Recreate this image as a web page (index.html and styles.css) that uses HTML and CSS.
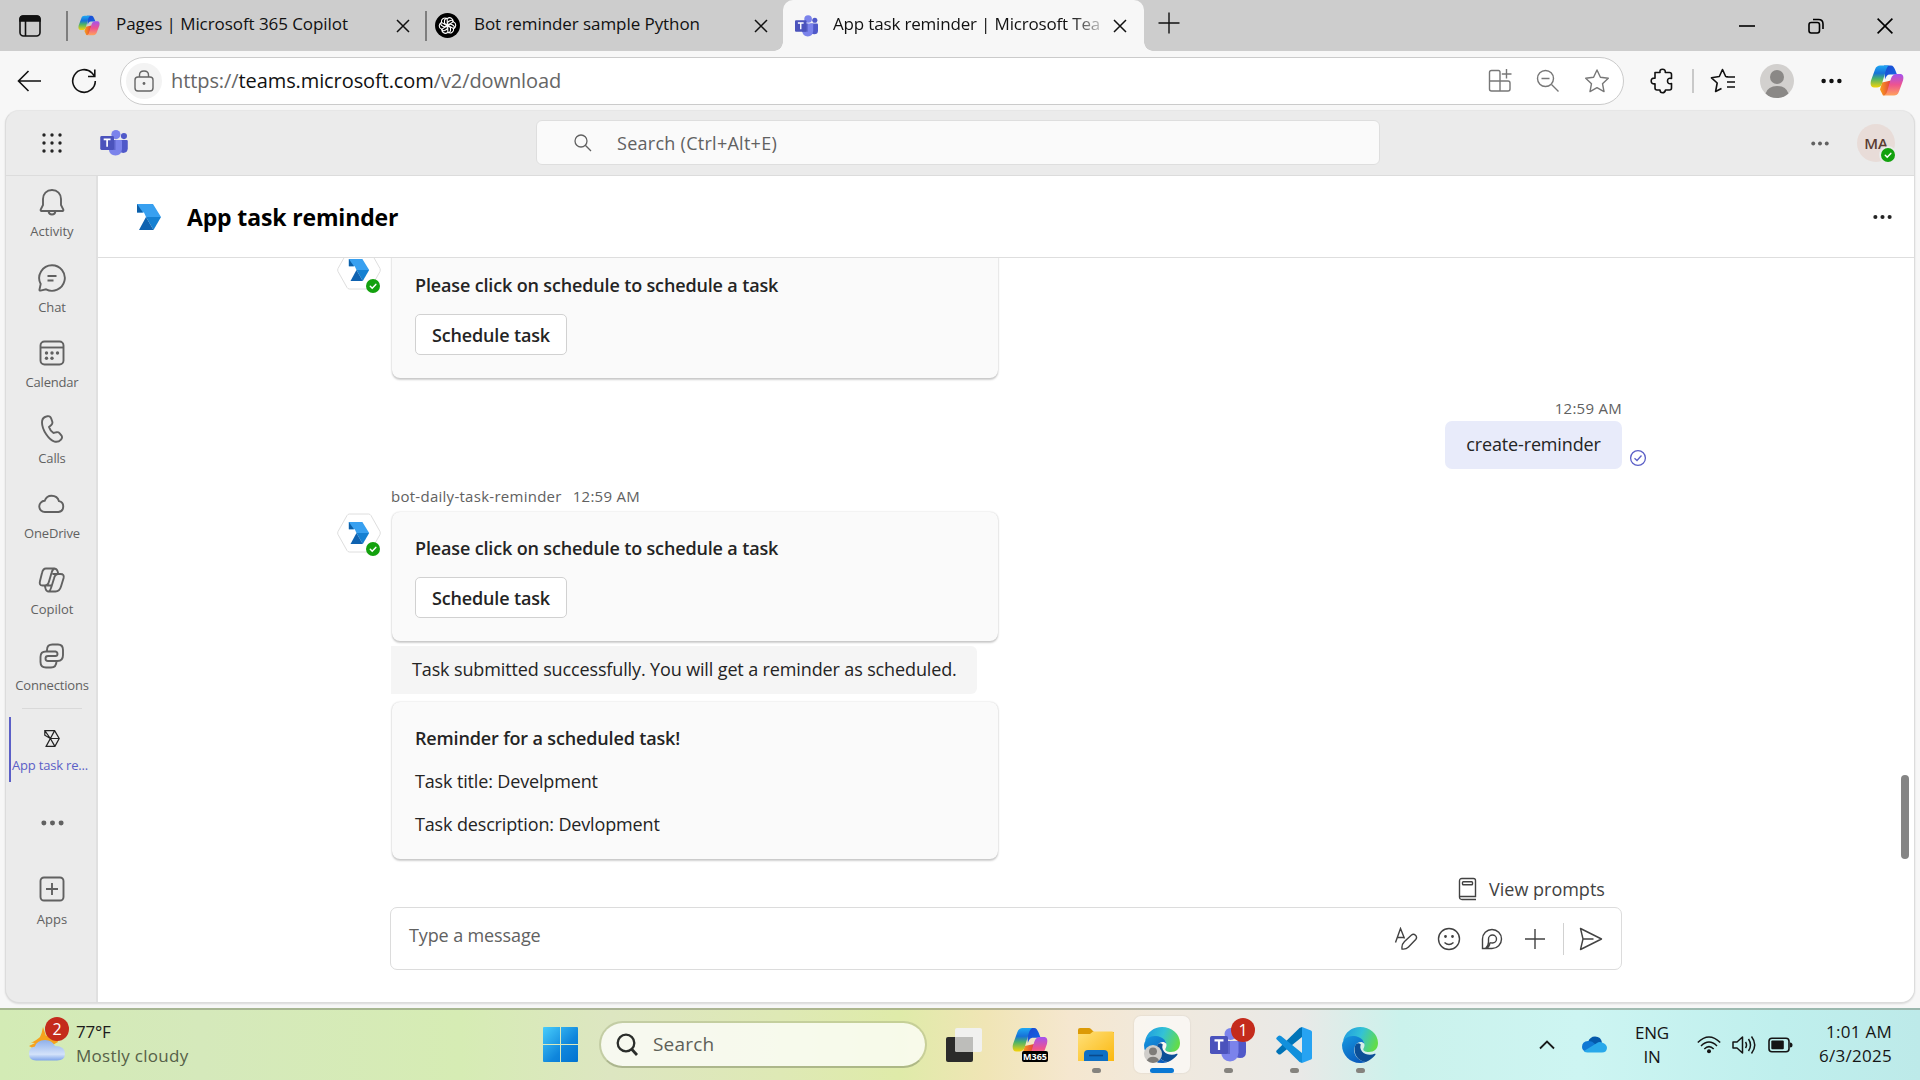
FILE: index.html
```html
<!DOCTYPE html>
<html lang="en">
<head>
<meta charset="utf-8">
<title>App task reminder | Microsoft Teams</title>
<link rel="stylesheet" href="styles.css">
</head>
<body>
<svg class="defs" aria-hidden="true">
  <defs>
    <linearGradient id="cpA" x1="0" y1="0" x2="0" y2="1"><stop offset="0" stop-color="#1fa8f4"/><stop offset=".35" stop-color="#1672d8"/><stop offset=".6" stop-color="#4bb26a"/><stop offset="1" stop-color="#f5d408"/></linearGradient>
    <linearGradient id="cpB" x1="0" y1="0" x2="0" y2="1"><stop offset="0" stop-color="#a452ef"/><stop offset=".5" stop-color="#ee5390"/><stop offset="1" stop-color="#ffa35c"/></linearGradient>
    <linearGradient id="cpC" x1="0" y1="0" x2="1" y2="1"><stop offset="0" stop-color="#1b48d0"/><stop offset="1" stop-color="#1668e6"/></linearGradient>
    <linearGradient id="cpD" x1="0" y1="0" x2="1" y2="0"><stop offset="0" stop-color="#f9a01b"/><stop offset="1" stop-color="#e23d3d"/></linearGradient>
    <linearGradient id="edA" x1="0" y1="0.2" x2="1" y2=".5"><stop offset="0" stop-color="#1f9be0"/><stop offset=".5" stop-color="#33c2d6"/><stop offset="1" stop-color="#62dc4a"/></linearGradient>
    <linearGradient id="edB" x1="0" y1="0" x2=".6" y2="1"><stop offset="0" stop-color="#1698e0"/><stop offset="1" stop-color="#0a5dbd"/></linearGradient>
    <linearGradient id="win" x1="0" y1="0" x2="1" y2="1"><stop offset="0" stop-color="#48cdfb"/><stop offset=".6" stop-color="#0f86dc"/><stop offset="1" stop-color="#0072d0"/></linearGradient>
    <linearGradient id="fold" x1="0" y1="0" x2="1" y2="1"><stop offset="0" stop-color="#ffe07a"/><stop offset="1" stop-color="#fbb80f"/></linearGradient>
    <linearGradient id="cloud" x1="0" y1="0" x2="0" y2="1"><stop offset="0" stop-color="#8fb0ea"/><stop offset=".7" stop-color="#d3e2fa"/><stop offset="1" stop-color="#7ea4ea"/></linearGradient>
    <symbol id="copilot" viewBox="0 0 34 30">
      <path d="M10 24 13 30C14 30 17 30 18 26L21 15 12 17Z" fill="url(#cpD)"/>
      <path d="M14 0H21C23 0 24 2 25 4L27 9H20C17 9 16 11 15 14Z" fill="url(#cpC)"/>
      <path d="M10 0H19C17 1 16 4 15 8L12 18C11 21 9 22 7 22H4C1 22 0 19 1 15L5 4C6 1 8 0 10 0Z" fill="url(#cpA)"/>
      <path d="M24 30H13C16 30 17 27 18 23L21 13C22 10 24 8.500 26 8.500H30C33 8.500 34 11 33 15L29 26C28 29 26 30 24 30Z" fill="url(#cpB)"/>
    </symbol>
    <symbol id="teams" viewBox="0 0 36 34">
      <circle cx="31" cy="8" r="4" fill="#5059c9"/><path d="M24 13H34.500Q36 13 36 14.500V24Q36 30 30 30 25 30 24 25Z" fill="#5059c9"/>
      <circle cx="20.500" cy="6" r="6" fill="#7b83eb"/><path d="M12 13H27Q28.500 13 28.500 14.500V24.500Q28 33 20 33.500 12 33 11 24.500Z" fill="#7b83eb"/>
      <path d="M12 13H20V26H11Z" fill="#4a52b8" opacity=".6"/>
      <rect y="8" width="18" height="18" rx="1.700" fill="#4b53bc"/><path d="M4.500 12.300H13.500M9 12.300V22" stroke="#fff" stroke-width="2.200" fill="none"/>
    </symbol>
    <symbol id="edge" viewBox="0 0 36 36">
      <path d="M1 14C3 5 10 0 18 0 28 0 36 7 36 16 36 22 32 25 27 25 23 25 20.500 23.500 21.500 21.500 24 18 22 12 15 11 9 10 4 12 1 14Z" fill="url(#edA)"/>
      <path d="M0 18C1 11 7 8.500 12 9 18 9.500 22 13 22.300 17 20 13.500 15 15 13 19 10 26 15 34 24 34.800 22 36 19 36 18 36 8 36 0 28 0 18Z" fill="url(#edB)"/>
      <path d="M13 19C11 27 16 34.500 24 34.900 28 33.500 32 30 33.500 27.500 33.800 26.500 33 26.500 32.500 26.800 29 28.500 23 28 20 24.500 18 22 18 19 18.800 17.500 16 15 14 17 13 19Z" fill="#0c4f97"/>
    </symbol>
    <symbol id="bot" viewBox="0 0 24 26">
      <path d="M0 0H16L24 13H9L7 8.500H0Z" fill="#38a0f0"/><path d="M0 0 6 8.500H0Z" fill="#0c5fa8"/><path d="M9 13H24L16.500 26Z" fill="#1580d2"/><path d="M9 13 16.500 26H2Z" fill="#0f62b0"/>
    </symbol>
    <symbol id="x" viewBox="0 0 14 14"><path d="M1 1 13 13M13 1 1 13" stroke="#111" stroke-width="1.500" fill="none"/></symbol>
    <symbol id="ok" viewBox="0 0 14 14"><circle cx="7" cy="7" r="7" fill="#13a10e"/><path d="M4.300 7.300 6.200 9.200 9.800 5.400" stroke="#fff" stroke-width="1.500" fill="none" stroke-linecap="round"/></symbol>
    <symbol id="dots" viewBox="0 0 24 6"><circle cx="3" cy="3" r="2.600"/><circle cx="12" cy="3" r="2.600"/><circle cx="21" cy="3" r="2.600"/></symbol>
    <symbol id="hex" viewBox="0 0 44 40"><path d="M12.500 1H31.500Q33 1 34 2.500L43 18.500Q43.600 20 43 21.500L34 37.500Q33 39 31.500 39H12.500Q11 39 10 37.500L1 21.500Q.4 20 1 18.500L10 2.500Q11 1 12.500 1Z" fill="#fff" stroke="#dedede"/></symbol>
  </defs>
</svg>

<header class="tabbar">
  <div class="workspace"><svg width="22" height="22" viewBox="0 0 22 22" fill="none" stroke="#111" stroke-width="1.600"><rect x="1" y="1" width="20" height="20" rx="3.500"/><path d="M1 6V4Q1 1 4 1H18Q21 1 21 4V6Z" fill="#111"/><path d="M6.500 6V21"/></svg></div>
  <div class="tab">
    <svg width="22" height="21"><use href="#copilot"/></svg><span class="tab-title">Pages | Microsoft 365 Copilot</span><svg class="close" width="14" height="14"><use href="#x"/></svg>
  </div>
  <div class="tab tab-second">
    <svg width="25" height="25" viewBox="0 0 25 25"><circle cx="12.500" cy="12.500" r="12.500" fill="#000"/><g fill="none" stroke="#fff" stroke-width="1.100"><path id="pet" d="M12.500 5.500C15 3.500 18.500 5.500 18 9L12.500 12.200 9.500 10.500V7.500Q10 5 12.500 5.500"/><use href="#pet" transform="rotate(60 12.500 12.500)"/><use href="#pet" transform="rotate(120 12.500 12.500)"/><use href="#pet" transform="rotate(180 12.500 12.500)"/><use href="#pet" transform="rotate(240 12.500 12.500)"/><use href="#pet" transform="rotate(300 12.500 12.500)"/></g></svg><span class="tab-title">Bot reminder sample Python</span><svg class="close" width="14" height="14"><use href="#x"/></svg>
  </div>
  <div class="tab tab-active">
    <svg width="23" height="22"><use href="#teams"/></svg><span class="tab-title fade">App task reminder | Microsoft Tea</span><svg class="close" width="14" height="14"><use href="#x"/></svg>
  </div>
  <svg class="newtab" width="22" height="22" viewBox="0 0 22 22"><path d="M11 .5V21.500M.5 11H21.500" stroke="#111" stroke-width="1.400"/></svg>
  <div class="winctl">
    <svg width="16" height="18" viewBox="0 0 16 18"><path d="M0 9H16" stroke="#000" stroke-width="1.600"/></svg>
    <svg width="16" height="16" viewBox="0 0 16 16" fill="none" stroke="#000" stroke-width="1.600"><rect x="1" y="4.500" width="10.500" height="10.500" rx="2.200"/><path d="M5 1.500H10.500Q15 1.500 15 6V11"/></svg>
    <svg width="16" height="16" viewBox="0 0 16 16"><path d="M.6.6 15.400 15.400M15.400.6.6 15.400" stroke="#000" stroke-width="1.600"/></svg>
  </div>
</header>

<div class="toolbar">
  <svg class="back" width="25" height="22" viewBox="0 0 25 22" fill="none" stroke="#111" stroke-width="1.600"><path d="M11.500 1 1.500 11 11.500 21M1.500 11H24"/></svg>
  <svg class="reload" width="26" height="26" viewBox="0 0 26 26" fill="none" stroke="#111" stroke-width="1.600"><path d="M24.300 13A11.300 11.300 0 1 1 21 5L23.500 8M23.800 1.500V8.500H17"/></svg>
  <div class="address">
    <span class="lock"><svg width="20" height="22" viewBox="0 0 20 22" fill="none" stroke="#666" stroke-width="1.400"><rect x="1" y="7" width="18" height="14" rx="3"/><path d="M5.500 7V5Q5.500 1 10 1T14.500 5V7"/><circle cx="10" cy="13.500" r="1.400" fill="#666" stroke="none"/></svg></span>
    <span class="url">https://<b>teams.microsoft.com</b>/v2/download</span>
    <div class="address-icons">
      <svg width="24" height="24" viewBox="0 0 24 24" fill="none" stroke="#777" stroke-width="1.400"><path d="M12 12V3Q12 1.500 10.500 1.500H3.500Q1.500 1.500 1.500 3.500V20Q1.500 22 3.500 22H20Q22 22 22 20V14Q22 12 20 12H1.500M12 12V22M18.500 0V9.500M13.800 5H23.500"/></svg>
      <svg width="24" height="24" viewBox="0 0 24 24" fill="none" stroke="#777" stroke-width="1.400"><circle cx="9.500" cy="9.500" r="8"/><path d="M15.500 15.500 22.500 22.500M5.500 9.500H13.500"/></svg>
      <svg width="26" height="26" viewBox="0 0 26 26" fill="none" stroke="#777" stroke-width="1.400" stroke-linejoin="round"><path d="M13 2 16.400 9.200 24.300 10.200 18.500 15.700 20 23.600 13 19.700 6 23.600 7.500 15.700 1.700 10.200 9.600 9.200Z"/></svg>
    </div>
  </div>
  <svg class="ext" width="24" height="26" viewBox="0 0 24 26" fill="none" stroke="#111" stroke-width="1.600" stroke-linejoin="round"><path d="M5 4.500H10Q9.500 1.200 12.500 1.200T15.300 4.500H19.500Q21.500 4.500 21.500 6.500V10.500Q17.500 9.500 17.500 13T21.500 15.500V20Q21.500 22 19.500 22H15.500Q15 24.800 12.500 24.800T10 22H7Q5 22 5 20V15.800Q1.200 16.200 1.200 13T5 10.200Z"/></svg>
  <i class="tool-sep"></i>
  <svg class="favs" width="26" height="26" viewBox="0 0 26 26" fill="none" stroke="#111" stroke-width="1.600" stroke-linejoin="round"><path d="M18 8.800 15.700 8.500 12.500 1.500 9.300 8.500 1.500 9.800 7.200 15 5.600 23.500 11.500 20.500M16 9H25M17 14H25M17 19H25"/></svg>
  <svg class="profile" width="34" height="34" viewBox="0 0 34 34"><circle cx="17" cy="17" r="17" fill="#d2d0ce"/><circle cx="17" cy="13" r="7" fill="#8a8886"/><path d="M5.500 29.500Q8 22 17 22T28.500 29.500Q24 34 17 34T5.500 29.500Z" fill="#8a8886"/></svg>
  <svg class="more" width="21" height="6" fill="#111"><use href="#dots"/></svg>
  <svg class="cp" width="34" height="31"><use href="#copilot"/></svg>
</div>

<main class="page">
  <div class="app">
    <header class="app-head">
      <svg class="waffle" width="20" height="20" viewBox="0 0 20 20" fill="#242424"><circle cx="2" cy="2" r="1.700"/><circle cx="10" cy="2" r="1.700"/><circle cx="18" cy="2" r="1.700"/><circle cx="2" cy="10" r="1.700"/><circle cx="10" cy="10" r="1.700"/><circle cx="18" cy="10" r="1.700"/><circle cx="2" cy="18" r="1.700"/><circle cx="10" cy="18" r="1.700"/><circle cx="18" cy="18" r="1.700"/></svg>
      <svg class="logo" width="28" height="26"><use href="#teams"/></svg>
      <div class="search"><svg width="18" height="18" viewBox="0 0 18 18" fill="none" stroke="#616161" stroke-width="1.300"><circle cx="7" cy="7" r="6"/><path d="M11.300 11.300 17 17"/></svg><span>Search (Ctrl+Alt+E)</span></div>
      <svg class="head-dots" width="18" height="5" fill="#616161"><use href="#dots"/></svg>
      <div class="me">MA<svg class="presence" width="18" height="18" viewBox="-2 -2 18 18"><circle cx="7" cy="7" r="9" fill="#ebebeb"/><use href="#ok" width="14" height="14"/></svg></div>
    </header>
    <div class="body">
      <nav class="rail">
        <a class="item"><svg width="28" height="28" viewBox="0 0 28 28"><path d="M14 2C8.500 2 5 6 5 11V17L2.700 21.500Q2.300 23 3.500 23H24.500Q25.700 23 25.300 21.500L23 17V11C23 6 19.500 2 14 2ZM10.500 23Q11 26.500 14 26.500T17.500 23"/></svg><span class="label-plain">Activity</span></a>
        <a class="item"><svg width="28" height="28" viewBox="0 0 28 28"><path d="M14 1.200A12.800 12.800 0 1 1 8 25.300L2.500 26.600Q1.200 26.800 1.500 25.500L2.700 20A12.800 12.800 0 0 1 14 1.200ZM9.500 12H18.500M9.500 16.500H15.500"/></svg><span>Chat</span></a>
        <a class="item"><svg width="28" height="28" viewBox="0 0 28 28"><rect x="2.500" y="2.500" width="23" height="23" rx="4"/><path d="M2.500 8.500H25.500"/><g fill="#616161" stroke="none"><circle cx="8.500" cy="14" r="1.700"/><circle cx="14" cy="14" r="1.700"/><circle cx="19.500" cy="14" r="1.700"/><circle cx="8.500" cy="19.300" r="1.700"/><circle cx="14" cy="19.300" r="1.700"/></g></svg><span>Calendar</span></a>
        <a class="item"><svg width="28" height="28" viewBox="0 0 28 28"><path d="M7 2 9.500 1.200Q12.300.8 13.200 3.500L14.300 6.800Q14.800 8.700 13.300 10L11 12Q12 15.500 15.500 18L18.800 17.200Q20.500 17 21.700 18.300L23.500 20.600Q24.800 22.700 23 24.600 20.300 27.500 16.500 26.600C11 25 4 15 4 7.500Q4 3.200 7 2Z"/></svg><span>Calls</span></a>
        <a class="item"><svg width="28" height="28" viewBox="0 0 28 28"><path d="M7 22H20.500A5.500 5.500 0 0 0 21 11.200Q19.500 5.800 13.500 5.800 8.500 5.800 6.700 10.800A5.600 5.600 0 0 0 7 22Z"/></svg><span>OneDrive</span></a>
        <a class="item"><svg width="28" height="28" viewBox="0 0 28 28"><path d="M8 2.500H16Q18.500 2.500 19.500 5L20.300 8H22.500Q26.500 8 25.600 12L23 20.500Q21.500 25.500 17.500 25.500H10.500Q8.500 25.500 7.700 23L6.700 19.500H4.500Q.8 19.500 2 15L4 7Q5 2.500 8 2.500ZM16.500 2.500Q14.500 3 13.500 7L11 15.500Q10 19.500 6.700 19.500M20.300 8Q17 8 16 12.500L13.500 20.500Q12 25.500 10.500 25.500M14.500 8H20.300M7 19.500H13.700"/></svg><span class="label-plain">Copilot</span></a>
        <a class="item"><svg width="28" height="28" viewBox="0 0 28 28"><path d="M9 10V8Q9 2.500 14.500 2.500H20Q25 2.500 25 8V13Q25 19 19.500 19H10Q7.500 19 7.500 16.500T10 14H17.500Q19.500 14 19.500 12T17.500 9.500H8Q2.500 9.500 2.500 15V20Q2.500 25.500 8 25.500H13Q18.500 25.500 18.500 19"/></svg><span>Connections</span></a>
        <i class="rail-line"></i>
        <a class="item item-active"><svg width="16" height="17" viewBox="0 0 24 26"><path d="M1 1H16L23 13 16.500 25H3L9.500 13 1 8ZM1 1 9.500 13H23M9.500 13 16.500 25M9.500 13 16 1M9.500 13 3 25"/></svg><span>App task re...</span></a>
        <svg class="rail-dots" width="23" height="6" fill="#616161"><use href="#dots"/></svg>
        <a class="item item-apps"><svg width="28" height="28" viewBox="0 0 28 28"><rect x="2.500" y="2.500" width="23" height="23" rx="3.500"/><path d="M14 8V20M8 14H20"/></svg><span class="label-plain">Apps</span></a>
      </nav>
      <section class="chat">
        <header class="chat-head"><svg width="24" height="26"><use href="#bot"/></svg><h1>App task reminder</h1><svg class="chat-dots" width="19" height="6" fill="#242424"><use href="#dots"/></svg></header>
        <div class="scroller">
          <div class="messages">
            <div class="row">
              <div class="avatar"><svg width="44" height="40"><use href="#hex"/><use href="#bot" x="11" y="9" width="22" height="22"/></svg><svg class="presence-bot" width="14" height="14"><use href="#ok"/></svg></div>
              <div class="card"><strong>Please click on schedule to schedule a task</strong><span class="btn">Schedule task</span></div>
            </div>
            <div class="mine">
              <time class="time">12:59 AM</time>
              <div class="bubble"><span>create-reminder</span><svg class="sent" width="18" height="18" viewBox="0 0 18 18" fill="none" stroke="#5b5fc7" stroke-width="1.300"><circle cx="9" cy="9" r="7.400"/><path d="M5.500 9.200 8 11.500 12.500 6.500"/></svg></div>
            </div>
            <div class="meta"><span class="bot-name">bot-daily-task-reminder</span><time class="time">12:59 AM</time></div>
            <div class="row">
              <div class="avatar"><svg width="44" height="40"><use href="#hex"/><use href="#bot" x="11" y="9" width="22" height="22"/></svg><svg class="presence-bot" width="14" height="14"><use href="#ok"/></svg></div>
              <div class="card"><strong>Please click on schedule to schedule a task</strong><span class="btn">Schedule task</span></div>
            </div>
            <div class="reply"><span>Task submitted successfully. You will get a reminder as scheduled.</span></div>
            <div class="card reminder"><strong>Reminder for a scheduled task!</strong><span>Task title: Develpment</span><span>Task description: Devlopment</span></div>
          </div>
          <i class="thumb"></i>
        </div>
        <div class="prompts"><svg width="19" height="24" viewBox="0 0 19 24" fill="none" stroke="#424242" stroke-width="1.400"><path d="M18 22.500H4Q1.500 22.500 1.500 20V4Q1.500 1.500 4 1.500H15.500Q17.500 1.500 17.500 3.500V19.500H1.500"/><rect x="4.500" y="4.800" width="10" height="3" rx=".8"/></svg><span>View prompts</span></div>
        <div class="composer">
          <span class="placeholder">Type a message</span>
          <svg width="24" height="24" viewBox="0 0 24 24"><path d="M1.500 15.500 6.500 1.500 10.500 11.500M3.300 10.500H10M8 21.500Q7.500 17.500 10.500 14.500L17.500 8Q19.500 6.500 21.500 8.300 23.500 10.300 21.700 12.500L14.500 20Q12 22.500 8 22Z"/></svg>
          <svg width="24" height="24" viewBox="0 0 24 24"><circle cx="12" cy="12" r="10.500"/><path d="M7.500 15.500Q12 19.500 16.500 15.500"/><circle cx="8.500" cy="9.500" r=".7" fill="#424242"/><circle cx="15.500" cy="9.500" r=".7" fill="#424242"/></svg>
          <svg width="24" height="24" viewBox="0 0 24 24"><path d="M2.500 21.500V12A9.500 9.500 0 1 1 12 21.500ZM5.500 21.500Q8.500 19 8.500 15V12A4 4 0 1 1 12.500 16Q10.500 16 10 15.500M5.500 21.500Q9.500 20.500 10 15.500"/></svg>
          <svg width="24" height="24" viewBox="0 0 24 24"><path d="M12 2V22M2 12H22"/></svg>
          <i class="composer-sep"></i>
          <svg width="24" height="24" viewBox="0 0 24 24"><path d="M1.500 1.500 22.500 12 1.500 22.500 4 12ZM4 12H14.500" stroke-linejoin="round"/></svg>
        </div>
      </section>
    </div>
  </div>
</main>

<footer class="taskbar">
  <div class="weather">
    <div class="weather-icon"><svg width="38" height="36" viewBox="0 0 38 36"><path d="M15 1 18 10Q22 6 26 6L30 16 12 26 1 20 7 17Q3 16 1 18 9 14 12 11Q14 7 15 1Z" fill="#f6a21d"/><path d="M8 34.500Q1 34.500 1 27.500 1 21.500 7 20.500 9 14 17 14 24 14 27 20 37 20 37 27.500 37 34.500 29 34.500Z" fill="url(#cloud)"/></svg><span class="badge">2</span></div>
    <div class="weather-text"><span class="temp">77°F</span><span class="cond">Mostly cloudy</span></div>
  </div>
  <div class="dock">
    <svg class="start" width="35" height="35" viewBox="0 0 35 35" fill="url(#win)"><path d="M1 0H17V17H0V1Q0 0 1 0ZM18 0H34Q35 0 35 1V17H18ZM0 18H17V35H1Q0 35 0 34ZM18 18H35V34Q35 35 34 35H18Z"/></svg>
    <div class="tsearch"><svg width="22" height="23" viewBox="0 0 22 23" fill="none" stroke="#2a2d2a" stroke-width="2.300"><circle cx="10" cy="10" r="8.300"/><path d="M15.500 16 21 22" stroke-width="2.800"/></svg><span>Search</span></div>
    <div class="dapp"><svg width="36" height="34" viewBox="0 0 36 34"><rect y="9" width="27" height="25" rx="2" fill="#2b2b2a"/><rect x="9" width="27" height="24" rx="2" fill="#f1f1ef"/><path d="M9 9H27V24H11Q9 24 9 22Z" fill="#bdbdba"/></svg></div>
    <div class="dapp"><svg width="36" height="34" viewBox="0 0 36 34"><use href="#copilot" width="36" height="32"/></svg><span class="m365">M365</span></div>
    <div class="dapp"><svg width="36" height="34" viewBox="0 0 36 34"><path d="M0 2Q0 0 2 0H11Q12 0 13 1L16 4H36V12H0Z" fill="#dc9a06"/><path d="M0 6H12L15 3.500H34Q36 3.500 36 5.500V33H0Z" fill="url(#fold)"/><path d="M6 33V26Q6 22 10 22H26Q30 22 30 26V33Z" fill="#0f70c4"/><path d="M11 27.500H25" stroke="#0a4a8c" stroke-width="1.600"/></svg><i class="run"></i></div>
    <div class="dapp dapp-on"><svg width="36" height="36"><use href="#edge"/></svg><svg class="person" width="18" height="18" viewBox="0 0 34 34"><circle cx="17" cy="17" r="17" fill="#cfcdca"/><circle cx="17" cy="12" r="7.500" fill="#7e7c79"/><path d="M5.500 29.500Q8 22 17 22T28.500 29.500Q24 34 17 34T5.500 29.500Z" fill="#7e7c79"/></svg><i class="run run-on"></i></div>
    <div class="dapp"><svg width="36" height="34"><use href="#teams"/></svg><span class="badge badge-teams">1</span><i class="run"></i></div>
    <div class="dapp"><svg width="36" height="36" viewBox="0 0 36 36"><path d="M26 0V10L5 27Q3.500 28 2.200 27L.7 25.500Q-.3 24.500.8 23.300L23.500 1Z" fill="#0073b7"/><path d="M.8 12.500Q-.3 11.500.7 10.500L2.200 9Q3.500 8 5 9L26 26V36L23.500 35Z" fill="#1290dc"/><path d="M26 0 35 3.500Q36 4 36 5V31Q36 32 35 32.500L26 36Z" fill="#27a3f2"/></svg><i class="run"></i></div>
    <div class="dapp"><svg width="36" height="36"><use href="#edge"/></svg><i class="run"></i></div>
  </div>
  <div class="tray">
    <svg class="caret" width="16" height="10" viewBox="0 0 16 10"><path d="M1 8.500 8 1.500 15 8.500" fill="none" stroke="#1a1a1a" stroke-width="1.800"/></svg>
    <svg class="od" width="25" height="17" viewBox="0 0 25 17"><path d="M6 6Q8 .5 13 .5 19 .5 20 6.500L14 10Z" fill="#0459ab"/><path d="M5 16Q0 15 0 11 0 5.500 6 5 10 4.500 13 8L18 11 10 16Z" fill="#0f78d4"/><path d="M5.500 16.500Q2 16 2 15L15 7Q17 5.500 20 6.500 25 8 25 12 24.500 16.500 20 16.500Z" fill="#28a8ea"/></svg>
    <div class="lang"><span>ENG</span><span>IN</span></div>
    <svg class="wifi" width="24" height="18" viewBox="0 0 24 18" fill="none" stroke="#151515" stroke-width="1.500"><path d="M.8 6.500Q12-4.500 23.200 6.500M4 10Q12 2 20 10M7.300 13Q12 8.300 16.700 13"/><circle cx="12" cy="15.300" r="2" fill="#151515" stroke="none"/></svg>
    <svg class="vol" width="25" height="20" viewBox="0 0 25 20" fill="none" stroke="#151515" stroke-width="1.500" stroke-linejoin="round"><path d="M1 7H5L10.500 2V18L5 13H1ZM13.500 7Q15.500 10 13.500 13M16.500 4Q20.500 10 16.500 16M19.500 1.500Q26 10 19.500 18.500"/></svg>
    <svg class="bat" width="25" height="16" viewBox="0 0 25 16"><rect x="1" y="1.200" width="20" height="13.500" rx="3" fill="none" stroke="#151515" stroke-width="1.600"/><rect x="3.300" y="3.600" width="12.500" height="8.700" rx="1" fill="#151515"/><path d="M22 5.500Q24.500 5.500 24.500 8T22 10.500Z" fill="#151515"/></svg>
    <div class="clock"><span>1:01 AM</span><span>6/3/2025</span></div>
  </div>
</footer>
</body>
</html>
```

FILE: styles.css
```css
* { box-sizing: border-box; }
body { margin: 0; width: 1920px; height: 1080px; overflow: hidden; display: flex; flex-direction: column; background: #f7f7f7; font-family: "Open Sans", "Noto Sans", sans-serif; color: #242424; }
svg { display: block; flex: none; }
span, time, strong { white-space: nowrap; }
.defs { position: absolute; width: 0; height: 0; }

/* tab strip */
.tabbar { height: 51px; flex: none; background: #cdcdcd; display: flex; align-items: center; font-size: 17px; letter-spacing: -.07px; color: #111; }
.workspace { width: 68px; height: 30px; padding: 4px 0 0 19px; border-right: 2px solid #7e7e7e; }
.tab { width: 359px; height: 30px; display: flex; align-items: center; padding: 0 15px 0 10px; border-right: 2px solid #7e7e7e; }
.tab svg:first-child { margin-right: 16px; }
.tab-second { width: 356px; padding: 0 15px 0 8px; border: 0; }
.tab-second svg:first-child { margin-right: 14px; }
.tab-title { margin-top: -5px; }
.close { margin-left: auto; }
.tab-active { height: 51px; width: 361px; align-self: flex-end; background: #f7f7f7; border: 0; border-radius: 10px 10px 0 0; padding: 0 17px 0 12px; position: relative; }
.tab-active svg:first-child { margin-right: 15px; }
.tab-active::before, .tab-active::after { content: ""; position: absolute; bottom: 0; width: 9px; height: 9px; background: radial-gradient(circle at 0 0, #cdcdcd 8.500px, #f7f7f7 9px); left: -9px; }
.tab-active::after { left: auto; right: -9px; background: radial-gradient(circle at 100% 0, #cdcdcd 8.500px, #f7f7f7 9px); }
.fade { letter-spacing: -.17px; -webkit-mask-image: linear-gradient(90deg, #000 89%, rgba(0,0,0,.25)); mask-image: linear-gradient(90deg, #000 89%, rgba(0,0,0,.25)); }
.newtab { margin-left: 14px; margin-bottom: 5px; }
.winctl { margin-left: auto; display: flex; gap: 53px; padding-right: 27px; align-items: center; }

/* browser toolbar */
.toolbar { height: 59px; flex: none; display: flex; align-items: center; padding: 0 16px 0 17px; }
.reload { margin-left: 29px; }
.address { margin-left: 23px; width: 1504px; height: 48px; border: 1.500px solid #cbcbcb; border-radius: 24px; background: #fff; display: flex; align-items: center; padding: 0 13px 0 5px; }
.lock { width: 36px; height: 36px; border-radius: 18px; background: #f3f3f3; display: flex; align-items: center; justify-content: center; }
.url { font-size: 20px; letter-spacing: -.09px; color: #666; margin-left: 9px; }
.url b { font-weight: 400; color: #111; }
.address-icons { display: flex; gap: 24px; margin-left: auto; align-items: center; }
.ext { margin-left: 26px; }
.tool-sep { width: 1.500px; height: 24px; background: #c9c9c9; margin-left: 18px; }
.favs { margin-left: 16px; }
.profile { margin-left: 24px; }
.more { margin-left: 27px; }
.cp { margin-left: auto; }

/* page frame */
.page { flex: none; height: 898px; padding: 0 5px; }
.app { height: 893px; border: 1px solid #dcdcdc; border-top-color: #e6e6e6; border-radius: 14px; overflow: hidden; background: #ebebeb; box-shadow: 0 1px 2px rgba(0,0,0,.12); display: flex; flex-direction: column; }
.app-head { height: 65px; flex: none; border-bottom: 1px solid #dcdcdc; display: flex; align-items: center; padding: 0 19px 0 36px; }
.logo { margin-left: 38px; }
.search { margin-left: 408px; width: 844px; height: 45px; margin-top: -1px; background: #fafafa; border: 1px solid #dedede; border-radius: 6px; display: flex; align-items: center; padding-left: 37px; font-size: 18px; letter-spacing: .27px; color: #616161; }
.search span { margin-left: 25px; }
.head-dots { margin-left: auto; }
.me { margin-left: 28px; width: 38px; height: 38px; border-radius: 19px; background: #e8dcd8; color: #5a3c33; font-size: 15px; font-weight: 600; display: flex; align-items: center; justify-content: center; position: relative; }
.presence { position: absolute; right: -2px; bottom: -2px; }
.body { flex: 1; display: flex; min-height: 0; }

/* left rail */
.rail { width: 92px; flex: none; border-right: 2px solid #e0e0e0; display: flex; flex-direction: column; align-items: center; padding: 12px 0 0 2px; font-size: 13px; letter-spacing: -.18px; color: #616161; }
.item { height: 75.600px; flex: none; width: 88px; display: flex; flex-direction: column; align-items: center; }
.item svg { fill: none; stroke: #616161; stroke-width: 1.900; }
.item span { margin-top: 6px; line-height: 18px; }
.label-plain { letter-spacing: 0; }
.rail-line { width: 60px; height: 1px; flex: none; background: #d9d9d9; margin-top: -9px; }
.item-active { height: 65px; margin-top: 9px; padding-top: 12px; position: relative; color: #5b5fc7; }
.item-active::before { content: ""; position: absolute; left: 1px; top: -1px; width: 2px; height: 65px; background: #5b5fc7; }
.item-active svg { stroke: #242424; }
.item-active span { margin: 9px 0 0 -4px; }
.rail-dots { margin-top: 37px; }
.item-apps { margin-top: 49px; }
.item-apps span { margin-top: 7px; }

/* conversation */
.chat { flex: 1; background: #fff; display: flex; flex-direction: column; min-width: 0; }
.chat-head { height: 82px; flex: none; border-bottom: 1px solid #dedede; display: flex; align-items: center; padding: 0 22px 0 39px; }
.chat-head h1 { margin: 0 0 0 26px; font-size: 23px; letter-spacing: -.15px; font-weight: 700; color: #000; white-space: nowrap; }
.chat-dots { margin-left: auto; }
.scroller { height: 612px; flex: none; overflow: hidden; position: relative; }
.messages { margin: -9px 0 0 239px; width: 1285px; display: flex; flex-direction: column; align-items: flex-start; font-size: 18px; letter-spacing: -.15px; }
.row { display: flex; gap: 12px; }
.avatar { position: relative; width: 43px; padding-top: 1px; }
.presence-bot { position: absolute; right: 0; top: 30px; }
.card { width: 606px; height: 129px; border-radius: 8px; background: #fafafa; box-shadow: 0 0 2px rgba(0,0,0,.16), 0 1.500px 2px rgba(0,0,0,.18); padding: 23px; display: flex; flex-direction: column; align-items: flex-start; font-size: 18px; line-height: 26px; }
.card strong { font-weight: 600; }
.btn { margin-top: 16px; width: 152px; height: 43px; border: 1px solid #d1d1d1; border-radius: 5px; background: #fff; display: flex; align-items: center; justify-content: center; font-weight: 600; }
.mine { align-self: flex-end; display: flex; flex-direction: column; align-items: flex-end; margin-top: 20px; }
.time, .bot-name { font-size: 15px; letter-spacing: .27px; line-height: 20px; color: #616161; }
.bubble { margin-top: 3px; width: 177px; height: 48px; border-radius: 7px; background: #e8ebfa; display: flex; align-items: center; justify-content: center; padding-bottom: 2px; position: relative; }
.sent { position: absolute; right: -25px; bottom: 2px; }
.meta { display: flex; gap: 11px; margin: 17px 0 6px 54px; }
.reply { margin: 5px 0 0 54px; height: 48px; width: 586px; background: #f5f5f5; border-radius: 0 6px 6px 0; display: flex; align-items: center; padding: 0 0 2px 21px; }
.reply span { letter-spacing: -.13px; }
.reminder { margin: 8px 0 0 55px; height: 157px; gap: 17px; }
.thumb { position: absolute; right: 5px; top: 517px; width: 8px; height: 84px; border-radius: 4px; background: #858585; }
.prompts { height: 37px; display: flex; align-items: center; margin-left: 1360px; font-size: 18px; color: #424242; }
.prompts span { margin-left: 12px; }
.composer { margin-left: 292px; width: 1232px; height: 63px; border: 1px solid #dcdcdc; border-radius: 7px; display: flex; align-items: center; padding: 1px 18px 0 18px; gap: 19px; font-size: 18px; letter-spacing: -.12px; color: #616161; }
.composer svg { fill: none; stroke: #424242; stroke-width: 1.400; }
.placeholder { margin: -8px auto 0 0; }
.composer-sep { width: 1px; height: 32px; background: #d1d1d1; margin: 0 -4px 0 -3px; }

/* taskbar */
.taskbar { height: 72px; flex: none; border-top: 2px solid rgba(110,120,100,.45); background: linear-gradient(90deg, #d3ebb5 0, #d5e9bb 200px, #d6ecb4 460px, #dde6c1 610px, #dee9b5 780px, #dfeba9 900px, #f0e5b5 985px, #f5e7cf 1070px, #f0e9de 1170px, #e9e9e7 1300px, #cbf2ec 1400px, #cdf5f2 1580px, #bfefed 1780px, #bdeae9 1920px) border-box; display: flex; align-items: center; padding-bottom: 1px; }
.weather { width: 543px; display: flex; padding-left: 28px; align-items: center; }
.weather-icon { position: relative; width: 38px; margin: -2px 10px 0 0; }
.badge { position: absolute; right: -3px; top: -9px; width: 24px; height: 24px; border-radius: 12px; background: #c42b1c; color: #fff; font-size: 16px; line-height: 24px; text-align: center; }
.weather-text { display: flex; flex-direction: column; font-size: 17px; line-height: 24px; color: #1c1c1c; margin-top: -2px; }
.temp { letter-spacing: -.25px; }
.cond { color: #566048; letter-spacing: .28px; }
.dock { display: flex; align-items: center; height: 69px; }
.tsearch { margin: 0 9px 0 21px; width: 328px; height: 47px; border-radius: 24px; border: 2px solid rgba(160,170,125,.4); border-bottom-color: rgba(140,150,110,.6); background: rgba(255,255,255,.75) padding-box; display: flex; align-items: center; padding-left: 15px; font-size: 19px; letter-spacing: .2px; color: #5e6058; }
.tsearch span { margin: -1px 0 0 15px; }
.dapp { width: 56px; height: 57px; margin-right: 10px; display: flex; align-items: center; justify-content: center; position: relative; }
.dapp-on { background: rgba(255,255,255,.6); border-radius: 7px; box-shadow: 0 0 2px rgba(0,0,0,.12); }
.run { position: absolute; left: 24px; bottom: 0; width: 9px; height: 5px; border-radius: 3px; background: #85837e; }
.run-on { left: 16px; width: 24px; background: #0a78d4; }
.person { position: absolute; left: 10px; bottom: 10px; }
.badge-teams { right: 1px; top: 2px; }
.m365 { position: absolute; right: 10px; bottom: 11px; width: 26px; height: 11px; border-radius: 2px; background: #000; color: #fff; font-size: 9px; line-height: 11px; font-weight: 700; text-align: center; }
.tray { margin-left: auto; display: flex; align-items: center; padding-right: 28px; font-size: 17px; line-height: 24px; color: #151515; }
.od { margin-left: 27px; }
.lang { width: 44px; margin-left: 23px; display: flex; flex-direction: column; align-items: center; letter-spacing: -.25px; }
.wifi { margin-left: 23px; }
.vol { margin-left: 11px; }
.bat { margin-left: 11px; }
.clock { width: 99px; margin-top: -2px; display: flex; flex-direction: column; align-items: flex-end; letter-spacing: .27px; }
```
